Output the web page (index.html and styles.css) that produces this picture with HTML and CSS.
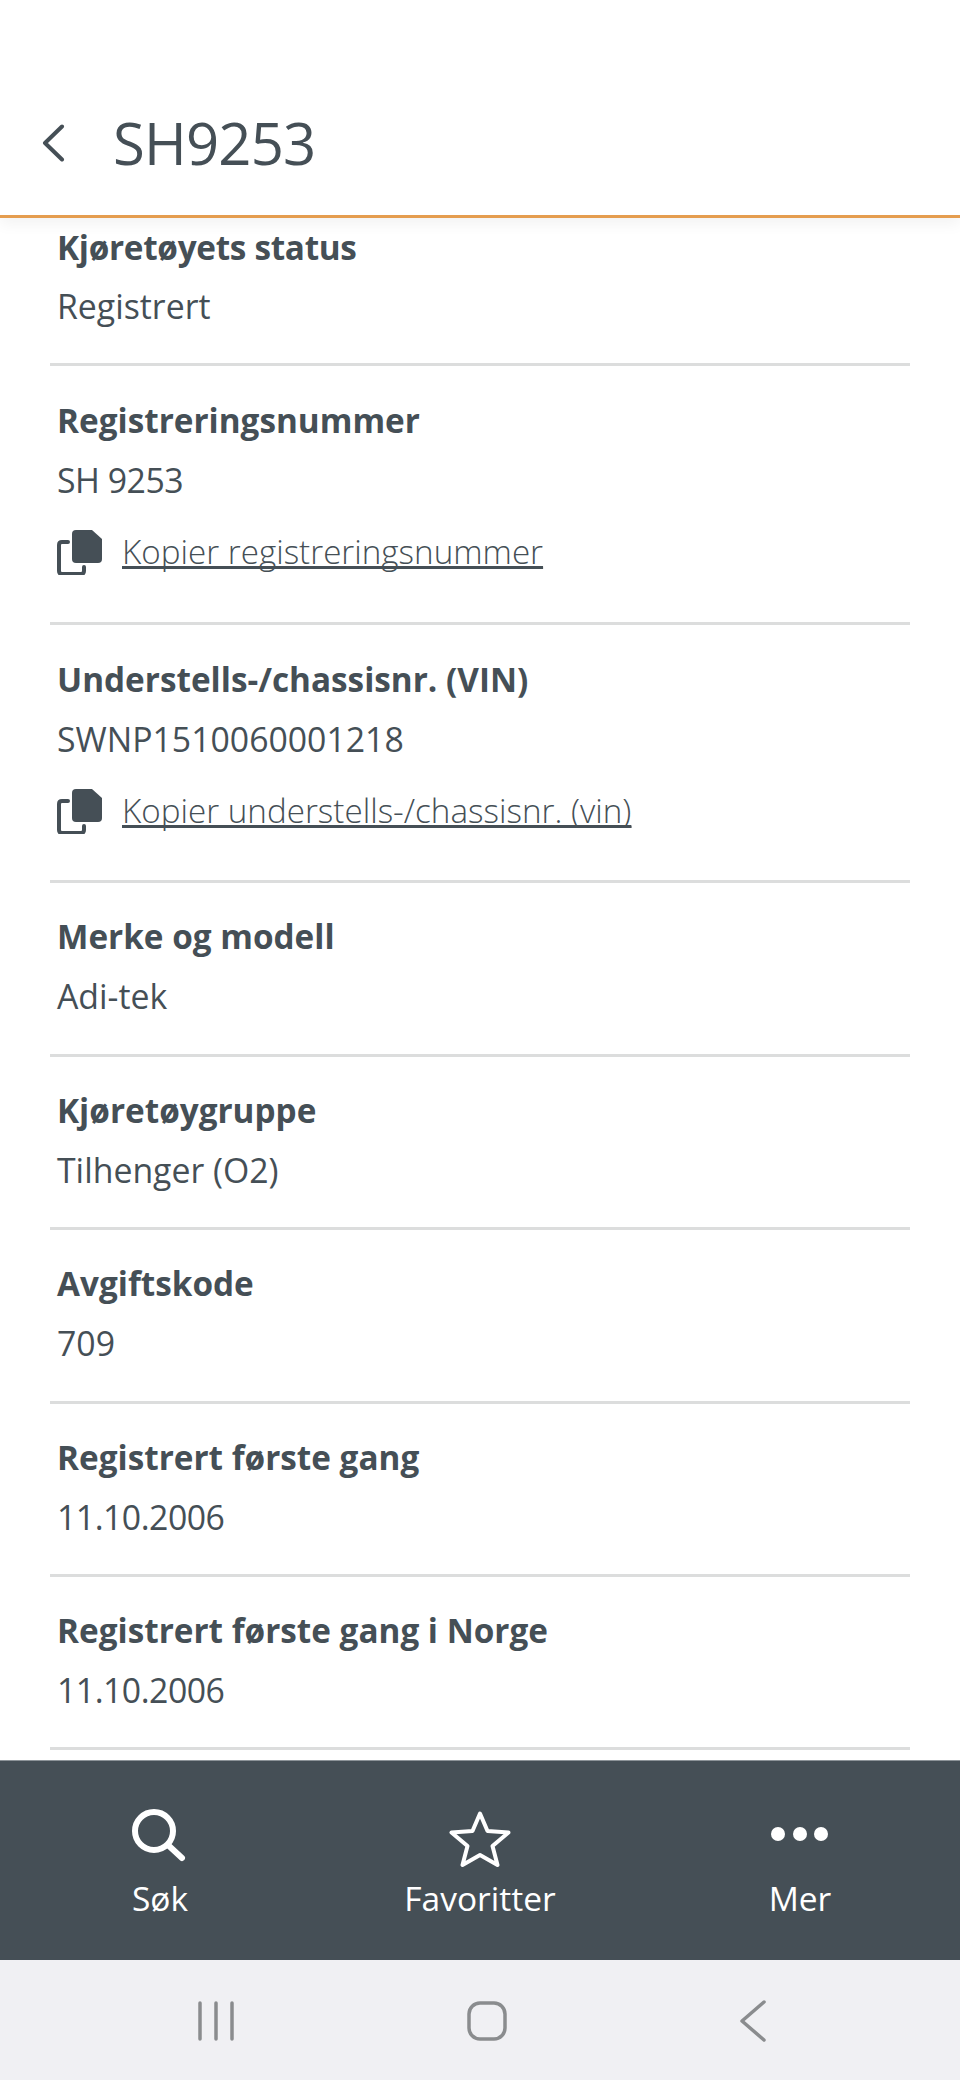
FILE: index.html
```html
<!DOCTYPE html>
<html lang="nb">
<head>
    <meta charset="UTF-8">
    <meta name="viewport" content="width=device-width, initial-scale=1.0">
    <title>SH9253</title>
    <link rel="stylesheet" href="styles.css">
</head>
<body>
    <!-- Top bar with back arrow and plate number -->
    <header class="top-bar">
        <svg class="back-icon" width="24" height="38" viewBox="0 0 24 38">
            <path d="M21 2.5 L4 19 L21 35.5" fill="none" stroke="#454f56" stroke-width="4" stroke-linecap="round" stroke-linejoin="round"/>
        </svg>
        <h1 class="plate">SH9253</h1>
    </header>

    <!-- Vehicle details -->
    <main class="details">
        <section class="row row-first">
            <h2 class="label">Kjøretøyets status</h2>
            <p class="value">Registrert</p>
        </section>
        <section class="row row-copy">
            <h2 class="label">Registreringsnummer</h2>
            <p class="value value-tight">SH 9253</p>
            <a class="copy-link" href="#">
                <svg class="copy-icon" width="46" height="46" viewBox="0 0 46 46">
                    <path d="M11 13 H5 Q2 13 2 16 V42 Q2 45 5 45 H24 Q27 45 27 42 V38" fill="none" stroke="#454f56" stroke-width="4" stroke-linecap="round"/>
                    <path d="M19 1 H35 L45 10 V30 Q45 34 41 34 H19 Q15 34 15 30 V5 Q15 1 19 1 Z" fill="#454f56"/>
                </svg>
                <span>Kopier registreringsnummer</span>
            </a>
        </section>
        <section class="row row-copy">
            <h2 class="label">Understells-/chassisnr. (VIN)</h2>
            <p class="value">SWNP1510060001218</p>
            <a class="copy-link" href="#">
                <svg class="copy-icon" width="46" height="46" viewBox="0 0 46 46">
                    <path d="M11 13 H5 Q2 13 2 16 V42 Q2 45 5 45 H24 Q27 45 27 42 V38" fill="none" stroke="#454f56" stroke-width="4" stroke-linecap="round"/>
                    <path d="M19 1 H35 L45 10 V30 Q45 34 41 34 H19 Q15 34 15 30 V5 Q15 1 19 1 Z" fill="#454f56"/>
                </svg>
                <span>Kopier understells-/chassisnr. (vin)</span>
            </a>
        </section>
        <section class="row">
            <h2 class="label">Merke og modell</h2>
            <p class="value">Adi-tek</p>
        </section>
        <section class="row">
            <h2 class="label">Kjøretøygruppe</h2>
            <p class="value">Tilhenger (O2)</p>
        </section>
        <section class="row">
            <h2 class="label">Avgiftskode</h2>
            <p class="value">709</p>
        </section>
        <section class="row">
            <h2 class="label">Registrert første gang</h2>
            <p class="value value-tight">11.10.2006</p>
        </section>
        <section class="row">
            <h2 class="label">Registrert første gang i Norge</h2>
            <p class="value value-tight">11.10.2006</p>
        </section>
    </main>

    <!-- App tab bar -->
    <nav class="tab-bar">
        <a class="tab" href="#">
            <svg class="tab-icon" width="56" height="62" viewBox="0 0 56 62">
                <circle cx="22" cy="23" r="19" fill="none" stroke="#fff" stroke-width="6"/>
                <path d="M36 37 L50 50" stroke="#fff" stroke-width="6" stroke-linecap="round"/>
            </svg>
            <span>Søk</span>
        </a>
        <a class="tab" href="#">
            <svg class="tab-icon" width="64" height="62" viewBox="0 0 64 62">
                <path d="M32 5.5 L39.5 23 L60.5 24.5 L44.5 38 L49.5 57 L32 47 L14.5 57 L19.5 38 L3.5 24.5 L24.5 23 Z" fill="none" stroke="#fff" stroke-width="4" stroke-linejoin="round"/>
            </svg>
            <span>Favoritter</span>
        </a>
        <a class="tab" href="#">
            <svg class="tab-icon" width="58" height="62" viewBox="0 0 58 62">
                <circle cx="7" cy="26" r="7" fill="#fff"/>
                <circle cx="29" cy="26" r="7" fill="#fff"/>
                <circle cx="50" cy="26" r="7" fill="#fff"/>
            </svg>
            <span>Mer</span>
        </a>
    </nav>

    <!-- Android system buttons -->
    <div class="system-bar">
        <svg width="38" height="40" viewBox="0 0 38 40">
            <path d="M3 2 V38 M19 2 V38 M35 2 V38" stroke="#8a8c8e" stroke-width="3.5" stroke-linecap="round"/>
        </svg>
        <svg width="40" height="40" viewBox="0 0 40 40">
            <rect x="2" y="2" width="36" height="36" rx="11" fill="none" stroke="#8a8c8e" stroke-width="3.5"/>
        </svg>
        <svg width="28" height="42" viewBox="0 0 28 42">
            <path d="M25 2 L3 21 L25 40" fill="none" stroke="#8a8c8e" stroke-width="3.5" stroke-linecap="round" stroke-linejoin="round"/>
        </svg>
    </div>
</body>
</html>
```

FILE: styles.css
```css
* {
    box-sizing: border-box;
}
html, body {
    margin: 0;
    height: 2080px;
}
body {
    display: flex;
    flex-direction: column;
    overflow: hidden;
    background-color: #fff;
    color: #454f56;
    font-family: "Open Sans", sans-serif;
}
.top-bar {
    display: flex;
    align-items: center;
    flex: none;
    height: 218px;
    padding: 70px 0 0 41px;
    border-bottom: 3px solid #e59d4f;
    box-shadow: 0 6px 14px rgba(0, 0, 0, 0.05);
    position: relative;
}
.back-icon {
    flex: none;
}
.plate {
    margin: 0 0 0 48px;
    font-size: 58px;
    font-weight: 400;
    letter-spacing: -0.8px;
    line-height: 1;
}
.details {
    flex: 1;
    padding: 0 50px;
}
.row {
    height: 173.4px;
    padding: 31px 0 0 7px;
    border-bottom: 3px solid #dcdddd;
}
.row-first {
    height: 148px;
    padding-top: 7px;
}
.row-copy {
    height: 258.7px;
    padding-top: 32px;
}
.label {
    margin: 0;
    font-size: 33.3px;
    font-weight: 700;
    line-height: 44px;
}
.row-first .label {
    letter-spacing: -0.3px;
}
.value {
    margin: 16px 0 0;
    font-size: 33.8px;
    line-height: 44px;
}
.value-tight {
    letter-spacing: -0.5px;
}
.row-first .value {
    margin-top: 15px;
}
.copy-link {
    display: flex;
    align-items: center;
    gap: 19px;
    margin-top: 27px;
    color: #454f56;
    font-size: 33.2px;
    font-weight: 300;
    line-height: 44px;
}
.copy-link span {
    text-decoration: underline;
    text-decoration-thickness: 2px;
    text-decoration-skip-ink: none;
    text-underline-offset: 3px;
}
.copy-icon {
    flex: none;
}
.tab-bar {
    display: flex;
    flex: none;
    justify-content: space-between;
    height: 200px;
    background-color: #454f56;
    border-top: 1px solid #8d9499;
}
.tab {
    display: flex;
    flex: 1;
    flex-direction: column;
    align-items: center;
    padding-top: 47px;
    color: #fff;
    font-size: 33.5px;
    line-height: 44px;
    text-decoration: none;
}
.tab-icon {
    display: block;
    margin-bottom: 6px;
}
.system-bar {
    display: flex;
    flex: none;
    align-items: center;
    justify-content: space-between;
    height: 120px;
    padding: 2px 193px 0 197px;
    background-color: #f0f0f3;
}
```
